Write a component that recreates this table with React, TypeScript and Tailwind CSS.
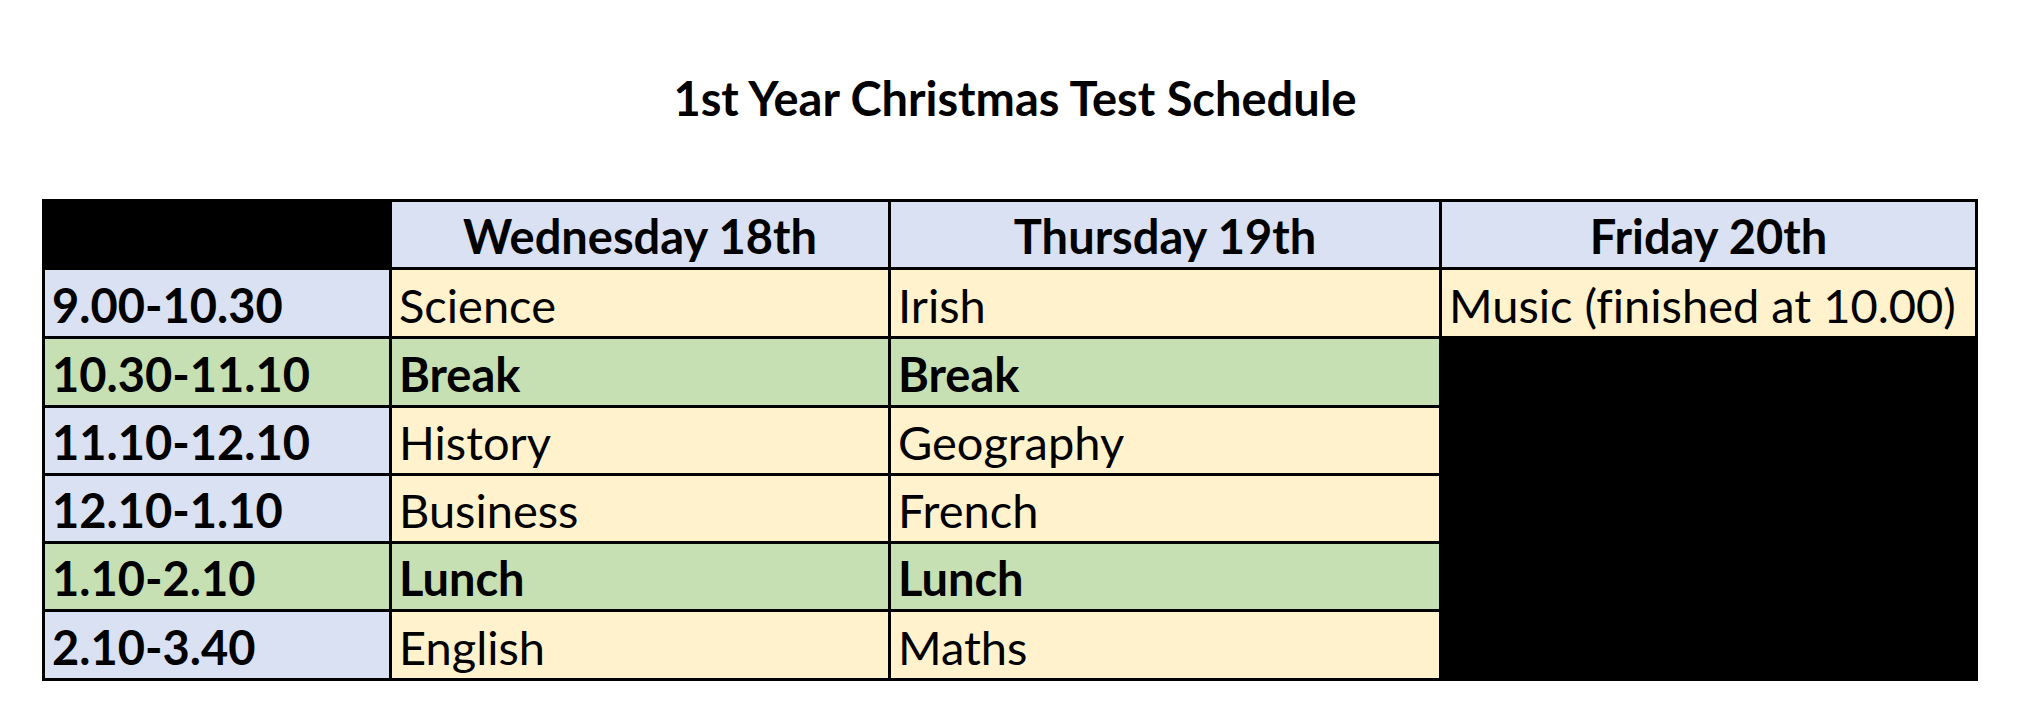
import React from "react";

type Cell = { text: string; bold?: boolean; bg: string; center?: boolean };

const BLUE = "bg-[#d9e1f2]";
const YELLOW = "bg-[#fff2cc]";
const GREEN = "bg-[#c6e0b4]";

const rows: { time: string; kind: "blue" | "green"; wed: string; thu: string }[] = [
  { time: "9.00-10.30", kind: "blue", wed: "Science", thu: "Irish" },
  { time: "10.30-11.10", kind: "green", wed: "Break", thu: "Break" },
  { time: "11.10-12.10", kind: "blue", wed: "History", thu: "Geography" },
  { time: "12.10-1.10", kind: "blue", wed: "Business", thu: "French" },
  { time: "1.10-2.10", kind: "green", wed: "Lunch", thu: "Lunch" },
  { time: "2.10-3.40", kind: "blue", wed: "English", thu: "Maths" },
];

function TextCell({ text, bold, bg, center }: Cell) {
  return (
    <div
      className={`${bg} flex items-end ${center ? "justify-center" : "justify-start pl-[7px]"} pb-[7px] overflow-hidden whitespace-nowrap`}
    >
      <span className={`text-[47px] leading-[47px] text-black [font-variant-ligatures:none] ${bold ? "font-bold" : "font-normal"}`}>{text}</span>
    </div>
  );
}

export default function App() {
  return (
    <div className="w-[2018px] h-[718px] bg-white font-['Lato',sans-serif] text-black">
      <div className="h-[199px] pt-[75px] pl-[12px] flex justify-center items-start">
        <h1 className="text-[47px] leading-[47px] font-bold [font-variant-ligatures:none]">1st Year Christmas Test Schedule</h1>
      </div>
      <div className="ml-[42px] w-[1936px] bg-black p-[3px] grid grid-cols-[344px_496px_548px_533px] grid-rows-[65px_66px_66px_65px_65px_65px_66px] gap-[3px]">
        <div className="bg-black" />
        <TextCell text="Wednesday 18th" bold bg={BLUE} center />
        <TextCell text="Thursday 19th" bold bg={BLUE} center />
        <TextCell text="Friday 20th" bold bg={BLUE} center />
        {rows.map((r, i) => {
          const rowBg = r.kind === "green" ? GREEN : YELLOW;
          const timeBg = r.kind === "green" ? GREEN : BLUE;
          const isBold = r.kind === "green";
          return (
            <React.Fragment key={r.time}>
              <TextCell text={r.time} bold bg={timeBg} />
              <TextCell text={r.wed} bold={isBold} bg={rowBg} />
              <TextCell text={r.thu} bold={isBold} bg={rowBg} />
              {i === 0 ? (
                <TextCell text="Music (finished at 10.00)" bg={YELLOW} />
              ) : i === 1 ? (
                <div className="bg-black row-span-5" />
              ) : null}
            </React.Fragment>
          );
        })}
      </div>
    </div>
  );
}
